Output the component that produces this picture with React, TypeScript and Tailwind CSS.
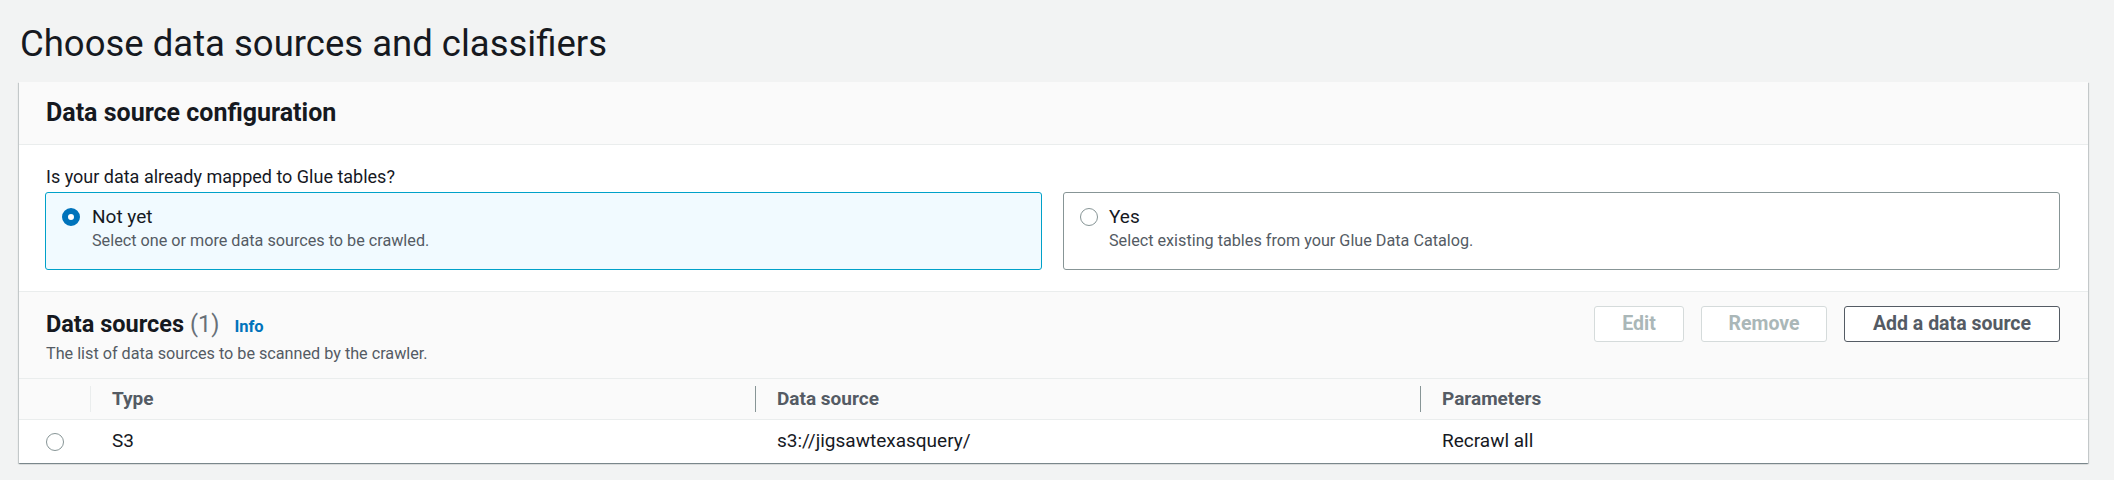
import React from 'react';

const font = { fontFamily: 'Roboto, "Liberation Sans", sans-serif' };

function Radio({ checked }: { checked?: boolean }) {
    if (checked) {
        return <div className="w-[18px] h-[18px] rounded-full border-[6px] border-[#0073bb] bg-white shrink-0" />;
    }
    return <div className="w-[18px] h-[18px] rounded-full border-[1.5px] border-[#879596] bg-white shrink-0" />;
}

function Tile({ checked, title, desc }: { checked?: boolean; title: string; desc: string }) {
    return (
        <div
            className={
                checked
                    ? 'h-[78px] rounded-[3px] border border-[#00a1c9] bg-[#f1faff] pl-[16px] pt-[12px] flex gap-[12px]'
                    : 'h-[78px] rounded-[3px] border border-[#879596] bg-white pl-[16px] pt-[12px] flex gap-[11px]'
            }
        >
            <div className="h-[24px] flex items-center">
                <Radio checked={checked} />
            </div>
            <div>
                <div className="text-[19px] leading-[24px] text-[#16191f]">{title}</div>
                <div className="text-[16.2px] leading-[24px] text-[#545b64]">{desc}</div>
            </div>
        </div>
    );
}

function Button({ label, disabled, className }: { label: string; disabled?: boolean; className: string }) {
    return (
        <button
            type="button"
            className={
                (disabled
                    ? 'border-[#d5dbdb] text-[#aab7b8] bg-white '
                    : 'border-[#545b64] text-[#545b64] bg-white ') +
                'h-[36px] border rounded-[3px] text-[19.5px] font-bold flex items-center justify-center ' +
                className
            }
        >
            {label}
        </button>
    );
}

function HeadCell({ label, light }: { label: string; light?: boolean }) {
    return (
        <div className="flex items-center h-full">
            <div className={light ? 'w-px h-[26px] bg-[#eaeded]' : 'w-px h-[26px] bg-[#879596]'} />
            <span className="pl-[21px] text-[19px] font-bold text-[#545b64]">{label}</span>
        </div>
    );
}

export default function App() {
    return (
        <div className="bg-[#f2f3f3] min-h-[480px] pl-[19px] pr-[26px]" style={font}>
            <h1 className="pt-[22px] pb-[16px] pl-[1px] text-[36.5px] leading-[44px] text-[#16191f]">
                Choose data sources and classifiers
            </h1>

            <div className="bg-white shadow-[0_1px_1px_0_rgba(0,28,36,0.3),1px_1px_1px_0_rgba(0,28,36,0.15),-1px_1px_1px_0_rgba(0,28,36,0.15)]">
                {/* Data source configuration */}
                <div className="h-[63px] bg-[#fafafa] border-b border-[#eaeded] px-[27px] flex items-center">
                    <h2 className="text-[25px] font-bold text-[#16191f]">Data source configuration</h2>
                </div>

                <div className="pl-[26px] pr-[28px] pt-[19px] pb-[21px]">
                    <div className="pl-[1px] text-[18px] leading-[26px] text-[#16191f]">
                        Is your data already mapped to Glue tables?
                    </div>
                    <div className="mt-[2px] grid grid-cols-2 gap-[21px]">
                        <Tile checked title="Not yet" desc="Select one or more data sources to be crawled." />
                        <Tile title="Yes" desc="Select existing tables from your Glue Data Catalog." />
                    </div>
                </div>

                {/* Data sources */}
                <div className="border-t border-[#eaeded] bg-[#fafafa] pl-[27px] pr-[28px] pt-[14px] pb-[12px] flex justify-between">
                    <div className="pt-[3px]">
                        <div className="flex items-baseline gap-[15px] leading-[30px]">
                            <h2 className="text-[23.5px] font-bold text-[#16191f]">
                                Data sources <span className="font-normal text-[#687078]">(1)</span>
                            </h2>
                            <a className="text-[16.5px] font-bold text-[#0073bb]">Info</a>
                        </div>
                        <div className="text-[16.2px] leading-[24px] text-[#545b64]">
                            The list of data sources to be scanned by the crawler.
                        </div>
                    </div>
                    <div className="flex gap-[17px]">
                        <Button label="Edit" disabled className="w-[90px]" />
                        <Button label="Remove" disabled className="w-[126px]" />
                        <Button label="Add a data source" className="w-[216px]" />
                    </div>
                </div>

                {/* Table */}
                <div className="grid grid-cols-[71px_665px_665px_1fr] h-[42px] bg-[#fafafa] border-t border-b border-[#eaeded]">
                    <div />
                    <HeadCell label="Type" light />
                    <HeadCell label="Data source" />
                    <HeadCell label="Parameters" />
                </div>
                <div className="grid grid-cols-[71px_665px_665px_1fr] h-[43px] items-center text-[19px] text-[#16191f]">
                    <div className="pl-[27px]">
                        <Radio />
                    </div>
                    <div className="pl-[22px]">S3</div>
                    <div className="pl-[22px]">s3://jigsawtexasquery/</div>
                    <div className="pl-[22px]">Recrawl all</div>
                </div>
            </div>
        </div>
    );
}
